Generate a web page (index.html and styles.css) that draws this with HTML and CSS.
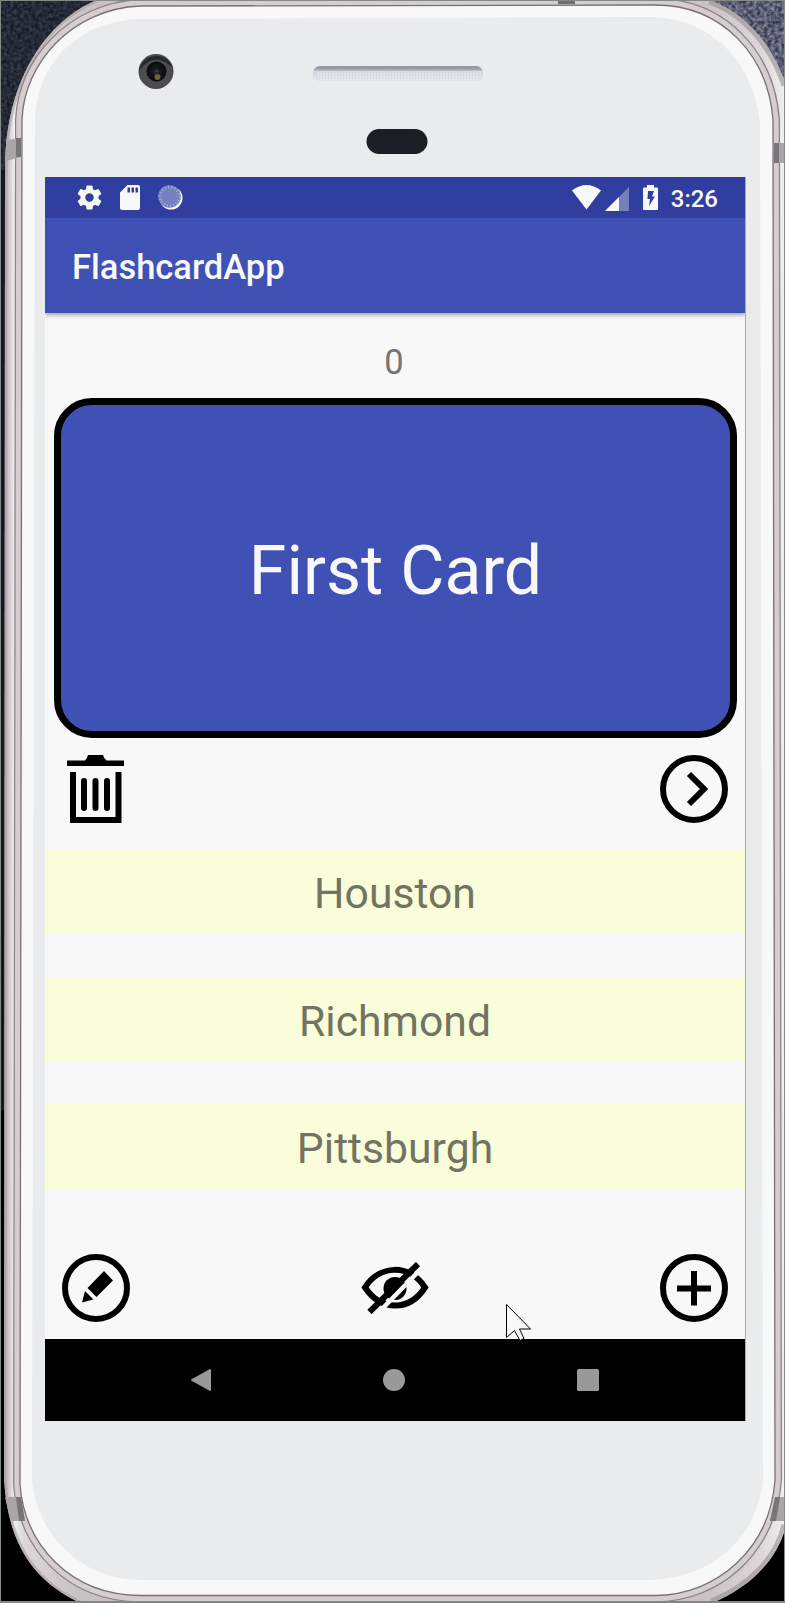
FILE: index.html
```html
<!DOCTYPE html>
<html lang="en">
<head>
<meta charset="utf-8">
<title>FlashcardApp</title>
<link rel="stylesheet" href="styles.css">
</head>
<body>
<div class="device">
  <svg class="shell" viewBox="0 0 785 1603" aria-hidden="true">
    <defs>
      <filter id="grain" x="0" y="0" width="100%" height="100%" color-interpolation-filters="sRGB">
        <feTurbulence type="fractalNoise" baseFrequency=".28" numOctaves="2" seed="4"/>
        <feColorMatrix values="1.300 0 0 0 -.35  1.300 0 0 0 -.34  1.300 0 0 0 -.25  0 0 0 0 1"/>
      </filter>
      <linearGradient id="metal" x1="0" x2="785" gradientUnits="userSpaceOnUse">
        <stop offset=".006" stop-color="#b5adaf"/><stop offset=".012" stop-color="#d3ccce"/><stop offset=".018" stop-color="#eeeeef"/><stop offset=".03" stop-color="#ddd7d9"/><stop offset=".1" stop-color="#c9c1c4"/>
        <stop offset=".9" stop-color="#c9c1c4"/><stop offset=".97" stop-color="#ddd7d9"/><stop offset="1" stop-color="#f0f0f0"/>
      </linearGradient>
      <radialGradient id="lens"><stop stop-color="#34404e"/><stop offset=".35" stop-color="#15181e"/><stop offset="1" stop-color="#090a0c"/></radialGradient>
      <linearGradient id="slot" x2="0" y2="1"><stop stop-color="#8e949e"/><stop offset=".25" stop-color="#a2a8b0"/><stop offset=".35" stop-color="#d2d5da"/><stop offset="1" stop-color="#e0e2e6"/></linearGradient>
      <pattern id="mesh" width="3" height="3" patternUnits="userSpaceOnUse"><path d="M0 1h1M2 2h1" stroke="#f4f5f7"/></pattern>
      <path id="rim" d="M140 6C72 9 24 63 22 120L20 1485C25 1545 70 1595 140 1595.500H655C718 1595 770 1548 775 1480L773 120C768 55 722 5 655 5Z"/>
      <clipPath id="body"><path d="M97 0C48 20 6 78 5 165L4 1480C8 1540 30 1579 80 1603H712C749 1588 778 1560 786 1525V85C773 47 748 14 710 0Z"/></clipPath>
    </defs>
    <rect width="785" height="1603" fill="#000"/>
    <rect width="120" height="170" fill="#1d202a"/>
    <rect width="120" height="170" filter="url(#grain)" opacity=".2"/>
    <rect x="690" width="95" height="110" fill="#6a6c82"/>
    <rect x="690" width="95" height="110" filter="url(#grain)" opacity=".5"/>
    <rect y="170" width="6" height="940" fill="#16181f"/>
    <g clip-path="url(#body)">
      <rect width="785" height="1603" fill="url(#metal)"/>
      <path d="M97 0C48 20 6 78 5 165L4 1480C8 1540 30 1579 80 1603" fill="none" stroke="#aba3a6" stroke-width="5" opacity=".7"/>
      <path d="M712 1603C749 1588 778 1560 786 1525M786 85C773 47 748 14 710 0" fill="none" stroke="#948d90" stroke-width="9" opacity=".6"/>
      <use href="#rim" fill="none" stroke="#8a8386" stroke-width="14"/>
      <use href="#rim" fill="none" stroke="#d5cdd0" stroke-width="11.500"/>
    </g>
    <path d="M6 140 21 138V157L6 161ZM774 143H785V163H774ZM5 1497H21L25 1521H11ZM775 1497H785V1521H770Z" fill="#aaa6a8"/>
    <path d="M16 138h5v19h-5ZM774 143h5v20h-5ZM16 1497h5l4 24h-6ZM775 1497h5l-4 24h-6Z" fill="#77747a"/>
    <use href="#rim" fill="#f8f8f8" stroke="#777174" stroke-width="1.300"/>
    <rect x="558" y="1" width="17" height="3" fill="#716d72"/>
    <path d="M140 19C84 21 37 57 35 120L32 1480C37 1535 82 1580 140 1580H650C710 1578 756 1541 763 1480L760 125C755 65 714 18 650 17Z" fill="#e9ebec"/>
    <circle cx="156" cy="71.500" r="17.500" fill="#4b4b51"/>
    <path d="M139 71A17.500 17.500 0 0 1 173 68C161 56 149 57 139 71Z" fill="#25272b"/>
    <circle cx="156.500" cy="71.500" r="10" fill="url(#lens)"/><circle cx="157.500" cy="77" r="3" fill="#69632c"/>
    <rect x="313" y="66" width="170" height="15" rx="7" fill="url(#slot)"/>
    <rect x="316" y="71" width="165" height="9" rx="4" fill="url(#mesh)"/>
    <rect x="366.500" y="129" width="61" height="25" rx="12.500" fill="#1c1e24"/>
    <path d="M.5 1603V.5H784.500V1603" fill="none" stroke="#858987"/>
    <path d="M0 1602H785" stroke="#888487" stroke-width="2"/>
  </svg>

  <main class="screen">
    <div class="status">
      <div class="status-left">
        <svg width="29" height="29" viewBox="0 0 24 24"><path fill="#f8f8f8" d="M19.430 12.980a7.800 7.800 0 0 0 0-1.960l2.110-1.650a.5.5 0 0 0 .12-.64l-2-3.460a.5.5 0 0 0-.61-.22l-2.490 1a7.300 7.300 0 0 0-1.690-.98l-.38-2.650A.49.490 0 0 0 14 2h-4a.49.490 0 0 0-.49.420l-.38 2.650c-.61.250-1.170.59-1.690.98l-2.490-1a.49.490 0 0 0-.61.220l-2 3.460a.49.490 0 0 0 .12.640l2.110 1.650a7.900 7.900 0 0 0 0 1.960l-2.110 1.650a.5.5 0 0 0-.12.640l2 3.460c.12.220.39.300.61.220l2.490-1c.52.400 1.080.730 1.690.98l.38 2.650c.03.240.24.420.49.420h4c.25 0 .46-.18.490-.42l.38-2.650c.61-.25 1.170-.59 1.690-.98l2.490 1c.23.090.49 0 .61-.22l2-3.460a.5.500 0 0 0-.12-.64ZM12 15.500a3.500 3.500 0 1 1 0-7 3.500 3.500 0 0 1 0 7Z"/></svg>
        <svg width="20" height="25" viewBox="0 0 20 25"><path fill="#f8f8f8" fill-rule="evenodd" d="M7.500 0H18q2 0 2 2v20.500q0 2.500-2 2.500H2q-2 0-2-2V7.500ZM7.500 2.500v5h2.500v-5Zm4 0v5h2.500v-5Zm4 0v5H18v-5Z"/></svg>
        <svg width="25" height="25" viewBox="0 0 25 25"><circle cx="13" cy="13" r="11.500" fill="#f8f8f8"/><circle cx="11.500" cy="11.500" r="11.300" fill="#7380bd"/><circle cx="11.500" cy="11.500" r="9.500" fill="none" stroke="#9aa3d0" stroke-width="3" stroke-dasharray="1.300 2"/></svg>
      </div>
      <div class="status-right">
        <svg class="wifi" width="30" height="25" viewBox="0 0 30 25"><path fill="#f8f8f8" d="M0 5.500Q14.500-5.500 29 5.500L14.500 24.500Z"/></svg>
        <svg class="signal" width="24" height="24" viewBox="0 0 24 24"><path fill="#747dbd" d="M24 0V24H0Z"/><path fill="#f8f8f8" d="M14 10V24H0Z"/></svg>
        <svg class="battery" width="15" height="25" viewBox="0 0 15 25"><path fill="#f8f8f8" d="M4 0h7v2.500h3q1 0 1 1V24q0 1-1 1H1q-1 0-1-1V3.500q0-1 1-1h3Z"/><path fill="#303f9f" d="M5 6h6L9 11.500h3L6 21l1-7H4.500Z"/></svg>
        <span class="clock">3:26</span>
      </div>
    </div>
    <header class="appbar"><h1>FlashcardApp</h1></header>
    <section class="content">
      <div class="count">0</div>
      <div class="card">First Card</div>
      <div class="card-actions">
        <svg width="58" height="68" viewBox="0 0 58 68"><path d="M0 5.500H18Q20 4 21 0H36Q37 4 39.500 5.500H57V11H0ZM3 17H9V62H48.500V17H54.500V68H3Z"/><path d="M17 26V53M28.500 26V53M40 26V53" stroke="#000" stroke-width="6" stroke-linecap="round"/></svg>
        <svg width="68" height="68" viewBox="0 0 68 68" fill="none" stroke="#000" stroke-width="6"><circle cx="34" cy="34" r="31"/><path d="M29 19 44 34 29 49"/></svg>
      </div>
      <div class="answers">
        <div class="answer">Houston</div>
        <div class="answer">Richmond</div>
        <div class="answer">Pittsburgh</div>
      </div>
      <div class="tools">
        <svg width="68" height="68" viewBox="0 0 68 68"><circle cx="34" cy="34" r="31" fill="none" stroke="#000" stroke-width="6"/><path d="M42 17 51 26.500 34.500 43 25.500 34ZM23 37 31.500 45.500 20 48.500Z"/></svg>
        <svg width="68" height="52" viewBox="0 0 68 52"><path d="M4 25.500C18 3 48 1 64 25.500C48 50 20 49 4 25.500Z" fill="none" stroke="#000" stroke-width="6"/><circle cx="34" cy="26.500" r="11.500"/><path d="M20 48 60 7" stroke="#f8f8f8" stroke-width="4.500"/><path d="M8.500 50 57 2" stroke="#000" stroke-width="6"/></svg>
        <svg width="68" height="68" viewBox="0 0 68 68" fill="none" stroke="#000" stroke-width="6"><circle cx="34" cy="34" r="31"/><path d="M17 34.500H51M34 17V51.500"/></svg>
      </div>
    </section>
    <nav class="navbar">
      <svg width="22" height="24" viewBox="0 0 22 24"><path d="M2 12 20 2V22Z" fill="#999" stroke="#999" stroke-width="2" stroke-linejoin="round"/></svg>
      <svg width="22" height="22" viewBox="0 0 22 22"><circle cx="11" cy="11" r="11" fill="#999"/></svg>
      <svg width="22" height="22" viewBox="0 0 22 22"><rect width="22" height="22" rx="1.500" fill="#999"/></svg>
    </nav>
  </main>

  <svg class="cursor" width="28" height="40" viewBox="0 0 28 40"><path d="M.5.500V33.500L8.500 26.500L14 36.500L18 34.500L13.500 25H24.500Z" fill="#f8f8f8" stroke="#000"/></svg>
</div>
</body>
</html>
```
FILE: styles.css
```css
* { box-sizing: border-box; }
body { margin: 0; background: #000; font-family: Roboto, "Liberation Sans", sans-serif; }
svg { display: block; flex: none; }
.device { position: relative; width: 785px; height: 1603px; padding: 177px 0 0 45px; overflow: hidden; }
.shell { position: absolute; inset: 0; width: 785px; height: 1603px; }
.screen { position: relative; display: flex; flex-direction: column; width: 701px; height: 1244px; border-right: 1px solid #aaa; background: #f8f8f8; }

.status { display: flex; justify-content: space-between; height: 41px; padding: 6px 27px 0 30px; background: #303f9f; }
.status-left { display: flex; align-items: center; gap: 16px; height: 29px; }
.status-left svg:last-child { margin-left: 2px; }
.status-right { display: flex; align-items: center; height: 29px; }
.signal { margin: 2px 14px 0 3px; }
.clock { margin: 2px 0 0 13px; color: #f8f8f8; font-size: 24px; font-weight: 500; line-height: 28px; }

.appbar { position: relative; display: flex; align-items: center; height: 95px; padding: 3px 27px 0; background: #3f51b5; box-shadow: 0 2px 4px rgba(0, 0, 0, .35); clip-path: inset(0 0 -8px 0); }
.appbar h1 { margin: 0; color: #f8f8f8; font-size: 34.500px; font-weight: 500; line-height: 40px; }

.content { display: flex; flex-direction: column; height: 1026px; }
.count { height: 85px; padding: 29px 2px 0 0; color: #757575; font-size: 34.500px; line-height: 40px; text-align: center; }
.card { display: flex; align-items: center; justify-content: center; height: 340px; margin: 0 8.500px; padding: 6px 0 0 1px; border: 7px solid #000; border-radius: 38px; background: #3f51b5; color: #f8f8f8; font-size: 68px; line-height: 80px; }
.card-actions { display: flex; justify-content: space-between; height: 111px; padding: 17px 17px 0 22px; }
.answers { display: flex; flex-direction: column; gap: 43px; }
.answer { height: 84.500px; padding-top: 2px; background: #f9fdd9; color: #72745f; font-size: 42.700px; line-height: 85px; text-align: center; }
.tools { display: flex; align-items: center; justify-content: space-between; height: 68px; margin: 65.500px 17px 0; }

.navbar { display: grid; grid-template-columns: repeat(3, 1fr); align-items: center; justify-items: center; height: 82px; padding: 0 60px 0 59px; background: #000; }
.cursor { position: absolute; left: 506px; top: 1304px; }
```
